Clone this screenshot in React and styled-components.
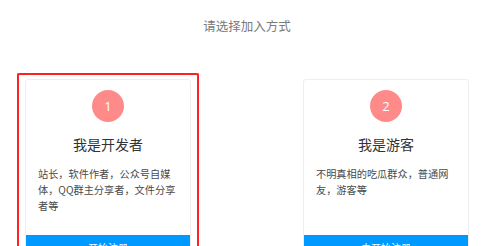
import styled, { createGlobalStyle } from 'styled-components';

const GlobalStyle = createGlobalStyle`
  html, body {
    margin: 0;
    padding: 0;
    background: #fff;
    overflow: hidden;
  }
  body {
    font-family: "Noto Sans CJK SC", "Noto Sans", sans-serif;
  }
`;

const OPTIONS = [
  {
    id: 1,
    title: '我是开发者',
    desc: '站长，软件作者，公众号自媒体，QQ群主分享者，文件分享者等',
    action: '开始注册',
    selected: true,
  },
  {
    id: 2,
    title: '我是游客',
    desc: '不明真相的吃瓜群众，普通网友，游客等',
    action: '去开始注册',
    selected: false,
  },
];

const App = () => {
  return (
    <Page>
      <GlobalStyle />
      <Heading>请选择加入方式</Heading>
      <Columns>
        {OPTIONS.map((opt) => (
          <Column key={opt.id} $selected={opt.selected}>
            <Card>
              <Body>
                <Badge>{opt.id}</Badge>
                <Title>{opt.title}</Title>
                <Desc>{opt.desc}</Desc>
              </Body>
              <Action>{opt.action}</Action>
            </Card>
          </Column>
        ))}
      </Columns>
    </Page>
  );
};

const Page = styled.div`
  width: 500px;
  height: 246px;
  padding-top: 18px;
  box-sizing: border-box;
  overflow: hidden;
`;

const Heading = styled.h2`
  margin: 0;
  padding-right: 6px;
  text-align: center;
  font-size: 12.5px;
  line-height: 16px;
  font-weight: 400;
  color: #7a7a7a;
`;

const Columns = styled.div`
  display: flex;
  justify-content: space-between;
  width: 460px;
  margin: 39px 0 0 17px;
`;

const Column = styled.div`
  width: 182px;
  box-sizing: border-box;
  padding: 4px 6px 0;
  border: 2px solid ${(p) => (p.$selected ? '#ff2020' : 'transparent')};
  border-bottom: none;
  border-radius: 2px;
`;

const Card = styled.div`
  border: 1px solid #eeeeee;
  border-radius: 3px;
  overflow: hidden;
  background: #fff;
`;

const Body = styled.div`
  height: 155px;
  box-sizing: border-box;
  padding: 10px 12px 0;
  display: flex;
  flex-direction: column;
  align-items: center;
`;

const Badge = styled.div`
  width: 32px;
  height: 32px;
  border-radius: 50%;
  background: #fe8a8a;
  color: #fff;
  font-family: "Open Sans", "Noto Sans", sans-serif;
  font-size: 13px;
  display: flex;
  align-items: center;
  justify-content: center;
`;

const Title = styled.div`
  margin-top: 13px;
  font-size: 14px;
  line-height: 18px;
  color: #333;
`;

const Desc = styled.p`
  align-self: stretch;
  margin: 13px 0 0;
  font-size: 10.2px;
  line-height: 16px;
  color: #4a4a4a;
`;

const Action = styled.div`
  background: #0099ff;
  color: #fff;
  text-align: center;
  font-size: 10px;
  line-height: 14px;
  padding: 6px 0 8px;
`;

export default App;
